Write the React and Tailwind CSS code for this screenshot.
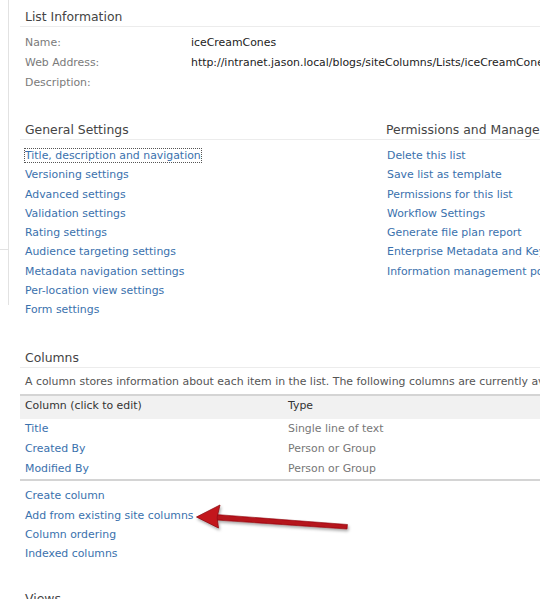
import React from "react";

const font = { fontFamily: '"DejaVu Sans", Verdana, sans-serif' };

function Link({ children, focus }) {
  return (
    <div className="h-[19.25px] leading-[19.25px] whitespace-nowrap">
      <span
        className={
          "text-[#3a71ad] " +
          (focus ? "outline outline-1 outline-dotted outline-[#555] outline-offset-0" : "")
        }
      >
        {children}
      </span>
    </div>
  );
}

function Heading({ children }) {
  return (
    <div className="h-[21px] leading-[21px] border-b border-[#ececec] pl-[5px] text-[12.4px] text-[#444] whitespace-nowrap">
      {children}
    </div>
  );
}

export default function App() {
  return (
    <div
      className="relative w-[540px] h-[599px] overflow-hidden bg-white flex text-[10.9px]"
      style={font}
    >
      <div className="w-[9px] shrink-0 flex flex-col">
        <div className="h-[250px] border-r border-b border-[#e2e2e2]" />
        <div className="h-[55px] border-r border-[#e2e2e2]" />
      </div>
      <div className="flex-1 min-w-0 pl-[11px]">
        {/* List Information */}
        <div className="pt-[6px]">
          <Heading>List Information</Heading>
          <div className="mt-[6px] pl-[5px]">
            <div className="flex h-[20px] leading-[20px] whitespace-nowrap">
              <div className="w-[166px] shrink-0 text-[#7a7a7a]">Name:</div>
              <div className="text-[#222]">iceCreamCones</div>
            </div>
            <div className="flex h-[20px] leading-[20px] whitespace-nowrap">
              <div className="w-[166px] shrink-0 text-[#7a7a7a]">Web Address:</div>
              <div className="text-[#222]">
                http://intranet.jason.local/blogs/siteColumns/Lists/iceCreamCones/AllItems.aspx
              </div>
            </div>
            <div className="flex h-[20px] leading-[20px] whitespace-nowrap">
              <div className="w-[166px] shrink-0 text-[#7a7a7a]">Description:</div>
              <div />
            </div>
          </div>
        </div>

        {/* Settings */}
        <div className="mt-[26px] flex">
          <div className="w-[361px] shrink-0">
            <Heading>General Settings</Heading>
            <div className="mt-[6px] pl-[5px]">
              <Link focus>Title, description and navigation</Link>
              <Link>Versioning settings</Link>
              <Link>Advanced settings</Link>
              <Link>Validation settings</Link>
              <Link>Rating settings</Link>
              <Link>Audience targeting settings</Link>
              <Link>Metadata navigation settings</Link>
              <Link>Per-location view settings</Link>
              <Link>Form settings</Link>
            </div>
          </div>
          <div className="flex-1 min-w-0">
            <Heading>Permissions and Management</Heading>
            <div className="mt-[6px] pl-[6px]">
              <Link>Delete this list</Link>
              <Link>Save list as template</Link>
              <Link>Permissions for this list</Link>
              <Link>Workflow Settings</Link>
              <Link>Generate file plan report</Link>
              <Link>Enterprise Metadata and Keywords Settings</Link>
              <Link>Information management policy settings</Link>
            </div>
          </div>
        </div>

        {/* Columns */}
        <div className="mt-[28px]">
          <Heading>Columns</Heading>
          <div className="h-[28px] leading-[28px] pl-[5px] text-[#555] whitespace-nowrap border-b-2 border-[#d4d4d4]">
            A column stores information about each item in the list. The following columns are currently available in this list:
          </div>
          <div className="h-[23px] leading-[19px] bg-[#f1f1f1] flex pl-[5px] text-[#333] whitespace-nowrap">
            <div className="w-[263px] shrink-0">Column (click to edit)</div>
            <div>Type</div>
          </div>
          <div className="border-b-2 border-[#d4d4d4] pl-[5px]">
            {[
              ["Title", "Single line of text"],
              ["Created By", "Person or Group"],
              ["Modified By", "Person or Group"],
            ].map(([a, b]) => (
              <div key={a} className="flex h-[20px] leading-[20px] whitespace-nowrap">
                <div className="w-[263px] shrink-0 text-[#3a71ad]">{a}</div>
                <div className="text-[#777]">{b}</div>
              </div>
            ))}
          </div>
          <div className="mt-[5px] pl-[5px]">
            <Link>Create column</Link>
            <Link>Add from existing site columns</Link>
            <Link>Column ordering</Link>
            <Link>Indexed columns</Link>
          </div>
        </div>

        {/* Views */}
        <div className="mt-[25px]">
          <Heading>Views</Heading>
        </div>
      </div>

      <svg
        className="absolute left-0 top-0 pointer-events-none"
        width="540"
        height="599"
        viewBox="0 0 540 599"
      >
        <defs>
          <filter id="sh" x="-20%" y="-50%" width="140%" height="200%">
            <feDropShadow dx="1" dy="2" stdDeviation="1.5" floodColor="#000" floodOpacity="0.35" />
          </filter>
        </defs>
        <g filter="url(#sh)">
          <path
            d="M216 514.5 L347.5 524.5 L347 529 L216 520 Z"
            fill="#b5121b"
            stroke="#8e0c12"
            strokeWidth="0.6"
            strokeLinejoin="round"
          />
          <path
            d="M196.5 517 L220 505 L217 517.5 L218.5 528 Z"
            fill="#c3161f"
            stroke="#8e0c12"
            strokeWidth="0.8"
            strokeLinejoin="round"
          />
        </g>
      </svg>
    </div>
  );
}
